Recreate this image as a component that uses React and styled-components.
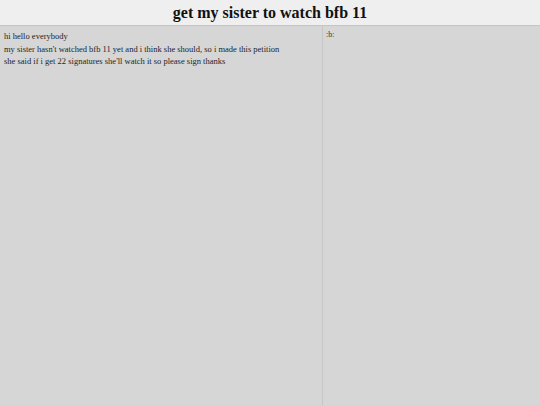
import React from "react";
import styled, { createGlobalStyle } from "styled-components";

const GlobalStyle = createGlobalStyle`
  html, body {
    margin: 0;
    padding: 0;
    height: 100%;
    background: #d6d6d6;
  }
  #root {
    height: 100%;
  }
`;

function App() {
  return (
    <>
      <GlobalStyle />
      <Page>
        <Header>
          <Title>get my sister to watch bfb 11</Title>
        </Header>
        <Main>
          <Description>
            <Line>hi hello everybody</Line>
            <Line>
              my sister hasn't watched bfb 11 yet and i think she should, so i
              made this petition
            </Line>
            <Line>
              she said if i get 22 signatures she'll watch it so please sign
              thanks
            </Line>
          </Description>
          <Sidebar>
            <Comment>:b:</Comment>
          </Sidebar>
        </Main>
      </Page>
    </>
  );
}

const Page = styled.div`
  display: flex;
  flex-direction: column;
  height: 100vh;
  font-family: "Liberation Serif", "DejaVu Serif", serif;
  color: #1f1f1f;
`;

const Header = styled.header`
  display: flex;
  justify-content: center;
  align-items: center;
  height: 25px;
  background: #efefef;
  border-bottom: 1px solid #c4c4c4;
`;

const Title = styled.h1`
  margin: 0;
  font-size: 16px;
  font-weight: 700;
  color: #111;
`;

const Main = styled.main`
  flex: 1;
  display: grid;
  grid-template-columns: 323px 1fr;
`;

const Description = styled.section`
  padding: 4px 4px;
  border-right: 1px solid #c6c6c6;
`;

const Line = styled.p`
  margin: 0;
  font-size: 8.5px;
  line-height: 12.5px;
`;

const Sidebar = styled.aside`
  padding: 3px 3px;
`;

const Comment = styled.div`
  font-size: 8px;
  line-height: 12px;
  color: #333;
`;

export default App;
